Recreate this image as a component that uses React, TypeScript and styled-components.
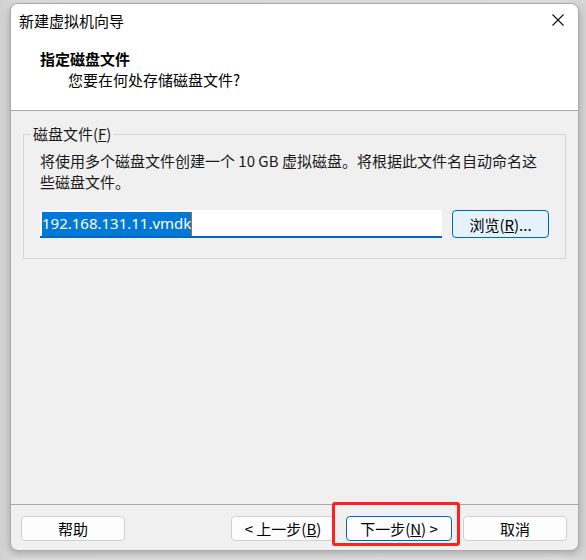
import React from "react";
import styled, { createGlobalStyle } from "styled-components";

const Global = createGlobalStyle`
  html, body { margin: 0; padding: 0; }
  body {
    background: linear-gradient(90deg, #d2d2d2 0%, #e2e2e2 4%, #e4e4e4 96%, #d4d4d4 100%);
    font-family: "Noto Sans CJK SC", "Noto Sans", sans-serif;
    color: #000;
  }
`;

const Stage = styled.div`
  width: 586px;
  height: 560px;
  box-sizing: border-box;
  padding: 3px 7px 9px 10px;
  display: flex;
`;

const Window = styled.div`
  flex: 1;
  display: flex;
  flex-direction: column;
  border: 1px solid #a9a9a9;
  border-radius: 8px;
  overflow: hidden;
  background: #f0f0f0;
  box-shadow: 0 3px 10px rgba(0, 0, 0, 0.28);
`;

const Header = styled.div`
  background: #ffffff;
  border-bottom: 1px solid #a7a7a7;
  padding-bottom: 20px;
`;

const TitleBar = styled.div`
  height: 32px;
  display: flex;
  align-items: center;
  justify-content: space-between;
  padding-left: 8px;
  font-size: 15px;
`;

const CloseButton = styled.div`
  width: 40px;
  height: 32px;
  display: flex;
  align-items: center;
  justify-content: center;
`;

const Heading = styled.div`
  padding: 12px 0 0 29px;
  font-size: 15px;
  line-height: 21px;
`;

const HeadingTitle = styled.div`
  font-weight: 700;
`;

const HeadingSub = styled.div`
  padding-left: 28px;
`;

const Body = styled.div`
  flex: 1;
  padding: 13px 12px;
`;

const Group = styled.fieldset`
  margin: 0;
  border: 1px solid #d6d6d6;
  padding: 0 16px 20px 16px;
  font-size: 15px;
`;

const Legend = styled.legend`
  margin-left: -9px;
  padding: 0 2px;
  line-height: 20px;
  color: #1a1a1a;
`;

const Description = styled.div`
  margin-top: 6px;
  line-height: 21px;
  color: #1a1a1a;
`;

const FileRow = styled.div`
  margin-top: 18px;
  display: flex;
  gap: 10px;
  align-items: stretch;
`;

const PathInput = styled.div`
  flex: 1;
  height: 28px;
  box-sizing: border-box;
  background: #ffffff;
  border-bottom: 2px solid #0067c0;
  padding: 2px 0 0 2px;
  font-family: "Noto Sans", sans-serif;
  font-size: 15px;
  line-height: 23px;
  display: flex;
`;

const Selected = styled.span`
  background: #0078d7;
  color: #ffffff;
`;

const Caret = styled.span`
  width: 1px;
  background: #c26a00;
`;

const Button = styled.button<{ $primary?: boolean; $w?: number; $h?: number; $tint?: boolean }>`
  width: ${(p) => p.$w ?? 104}px;
  height: ${(p) => p.$h ?? 25}px;
  box-sizing: border-box;
  border: 1px solid ${(p) => (p.$primary ? "#0067c0" : "#d0d0d0")};
  border-radius: 4px;
  background: ${(p) => (p.$tint ? "#e5f1fb" : "#fdfdfd")};
  font-family: "Noto Sans CJK SC", "Noto Sans", sans-serif;
  font-size: 15px;
  color: #000;
  padding: 0;
  display: flex;
  align-items: center;
  justify-content: center;
  white-space: pre;
`;

const Footer = styled.div`
  border-top: 1px solid #a7a7a7;
  padding: 11px 11px 9px 10px;
  display: flex;
  align-items: center;
`;

const Spacer = styled.div`
  flex: 1;
`;

const NavGroup = styled.div`
  display: flex;
  gap: 11px;
`;

const Highlight = styled.div`
  position: relative;
  display: flex;
`;

const RedFrame = styled.div`
  position: absolute;
  left: -14px;
  right: -8px;
  top: -14px;
  bottom: -5px;
  border: 3px solid #ff2020;
  border-radius: 3px;
  pointer-events: none;
`;

export default function App() {
  return (
    <>
      <Global />
      <Stage>
        <Window>
          <Header>
            <TitleBar>
              <span>新建虚拟机向导</span>
              <CloseButton>
                <svg width="12" height="12" viewBox="0 0 12 12">
                  <path d="M0.5 0.5 L11.5 11.5 M11.5 0.5 L0.5 11.5" stroke="#111" strokeWidth="1.1" fill="none" />
                </svg>
              </CloseButton>
            </TitleBar>
            <Heading>
              <HeadingTitle>指定磁盘文件</HeadingTitle>
              <HeadingSub>您要在何处存储磁盘文件?</HeadingSub>
            </Heading>
          </Header>
          <Body>
            <Group>
              <Legend>
                磁盘文件(<u>F</u>)
              </Legend>
              <Description>
                将使用多个磁盘文件创建一个 10 GB 虚拟磁盘。将根据此文件名自动命名这
                <br />
                些磁盘文件。
              </Description>
              <FileRow>
                <PathInput>
                  <Selected>192.168.131.11.vmdk</Selected>
                  <Caret />
                </PathInput>
                <Button $w={97} $h={28} $primary $tint>
                  浏览(<u>R</u>)...
                </Button>
              </FileRow>
            </Group>
          </Body>
          <Footer>
            <Button>帮助</Button>
            <Spacer />
            <NavGroup>
              <Button>
                {"< 上一步("}
                <u>B</u>
                {")"}
              </Button>
              <Highlight>
                <Button $w={106} $primary>
                  {"下一步("}
                  <u>N</u>
                  {") >"}
                </Button>
                <RedFrame />
              </Highlight>
              <Button>取消</Button>
            </NavGroup>
          </Footer>
        </Window>
      </Stage>
    </>
  );
}
